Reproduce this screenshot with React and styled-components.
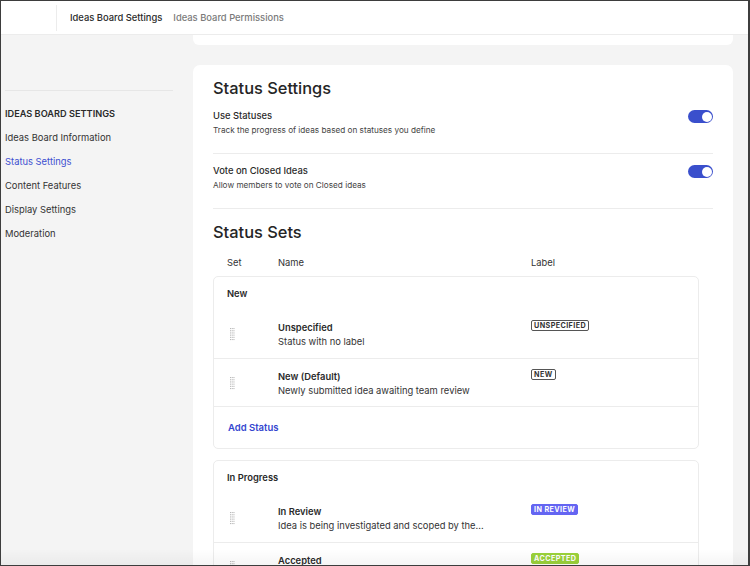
import React from 'react';
import styled, { createGlobalStyle } from 'styled-components';

const Global = createGlobalStyle`
  html, body { margin: 0; padding: 0; }
  body { font-family: Inter, "Noto Sans", sans-serif; color: #2b2b2b; }
  * { box-sizing: border-box; }
`;

const sidebarItems = [
  { label: 'Ideas Board Information' },
  { label: 'Status Settings', active: true },
  { label: 'Content Features' },
  { label: 'Display Settings' },
  { label: 'Moderation' },
];

const statusSets = [
  {
    name: 'New',
    rows: [
      { title: 'Unspecified', desc: 'Status with no label', badge: 'UNSPECIFIED', kind: 'outline' },
      { title: 'New (Default)', desc: 'Newly submitted idea awaiting team review', badge: 'NEW', kind: 'outline' },
    ],
    add: true,
  },
  {
    name: 'In Progress',
    rows: [
      { title: 'In Review', desc: 'Idea is being investigated and scoped by the...', badge: 'IN REVIEW', kind: 'indigo' },
      { title: 'Accepted', desc: 'Idea has been accepted', badge: 'ACCEPTED', kind: 'lime' },
    ],
  },
];

const DragHandle = () => (
  <svg width="5" height="13" viewBox="0 0 5 13">
    {[0, 1, 2, 3, 4, 5].map(r =>
      [0, 1, 2].map(c => (
        <rect key={`${r}-${c}`} x={c * 1.7} y={r * 2.2} width="1.1" height="1.1" fill="#b9b9b9" />
      ))
    )}
  </svg>
);

const App = () => (
  <Frame>
    <Global />
    <TopBar>
      <TopDivider />
      <Tab $active>Ideas Board Settings</Tab>
      <Tab>Ideas Board Permissions</Tab>
    </TopBar>
    <Body>
      <Sidebar>
        <SideRule />
        <SideHeading>IDEAS BOARD SETTINGS</SideHeading>
        {sidebarItems.map(item => (
          <SideItem key={item.label} $active={item.active}>{item.label}</SideItem>
        ))}
      </Sidebar>
      <Main>
        <PrevCard />
        <Card>
          <H1>Status Settings</H1>
          <Setting>
            <div>
              <SettingTitle>Use Statuses</SettingTitle>
              <SettingDesc>Track the progress of ideas based on statuses you define</SettingDesc>
            </div>
            <Toggle />
          </Setting>
          <Setting>
            <div>
              <SettingTitle>Vote on Closed Ideas</SettingTitle>
              <SettingDesc>Allow members to vote on Closed ideas</SettingDesc>
            </div>
            <Toggle />
          </Setting>
          <H2>Status Sets</H2>
          <HeaderRow>
            <span>Set</span>
            <span>Name</span>
            <span>Label</span>
          </HeaderRow>
          {statusSets.map(set => (
            <SetBox key={set.name}>
              <SetName>{set.name}</SetName>
              {set.rows.map(row => (
                <StatusRow key={row.title}>
                  <HandleCell><DragHandle /></HandleCell>
                  <div>
                    <RowTitle>{row.title}</RowTitle>
                    <RowDesc>{row.desc}</RowDesc>
                  </div>
                  <BadgeCell>
                    <Badge $kind={row.kind}>{row.badge}</Badge>
                  </BadgeCell>
                </StatusRow>
              ))}
              {set.add && <AddRow>Add Status</AddRow>}
            </SetBox>
          ))}
        </Card>
      </Main>
    </Body>
    <BottomFade />
  </Frame>
);

const Frame = styled.div`
  position: relative;
  width: 750px;
  height: 566px;
  overflow: hidden;
  border: 1px solid #3d3d3d;
  border-right-width: 2px;
  background: #f4f4f4;
`;

const TopBar = styled.div`
  height: 34px;
  background: #fff;
  border-bottom: 1px solid #ececec;
  display: flex;
  align-items: center;
  padding-left: 55px;
`;

const TopDivider = styled.div`
  width: 1px;
  height: 26px;
  background: #ececec;
  margin-right: 13px;
`;

const Tab = styled.div`
  font-size: 9.4px;
  font-weight: 500;
  color: ${p => (p.$active ? '#2a2a2a' : '#7a7a7a')};
  margin-right: 11px;
`;

const Body = styled.div`
  display: flex;
`;

const Sidebar = styled.div`
  width: 192px;
  padding: 55px 20px 0 4px;
`;

const SideRule = styled.div`
  height: 1px;
  background: #e6e6e6;
  margin-bottom: 11px;
`;

const SideHeading = styled.div`
  font-size: 9.2px;
  font-weight: 600;
  color: #2a2a2a;
  height: 24px;
  line-height: 24px;
`;

const SideItem = styled.div`
  font-size: 9.4px;
  color: ${p => (p.$active ? '#3b4fd0' : '#333')};
  height: 24px;
  line-height: 24px;
`;

const Main = styled.div`
  width: 540px;
`;

const PrevCard = styled.div`
  height: 10px;
  background: #fff;
  border-radius: 0 0 6px 6px;
  margin-bottom: 20px;
`;

const Card = styled.div`
  background: #fff;
  border-radius: 7px;
  padding: 12px 20px 20px;
`;

const H1 = styled.div`
  font-size: 16.4px;
  font-weight: 500;
  color: #252525;
  line-height: 22px;
  margin-bottom: 5px;
`;

const Setting = styled.div`
  display: flex;
  justify-content: space-between;
  align-items: flex-start;
  padding: 5px 0 16px;
  border-bottom: 1px solid #ececec;
  & + & { padding-top: 10px; }
`;

const SettingTitle = styled.div`
  font-size: 9.4px;
  font-weight: 500;
  color: #2a2a2a;
  line-height: 14px;
`;

const SettingDesc = styled.div`
  font-size: 8.2px;
  color: #444;
  line-height: 14px;
`;

const Toggle = styled.div`
  position: relative;
  width: 25px;
  height: 13px;
  border-radius: 7px;
  background: #3a4fcc;
  margin-top: 1px;
  &::after {
    content: '';
    position: absolute;
    right: 1.5px;
    top: 1.5px;
    width: 10px;
    height: 10px;
    border-radius: 50%;
    background: #fff;
  }
`;

const H2 = styled.div`
  font-size: 16.4px;
  font-weight: 500;
  color: #252525;
  line-height: 20px;
  margin-top: 13px;
`;

const HeaderRow = styled.div`
  display: grid;
  grid-template-columns: 51px 253px 1fr;
  padding: 0 14px;
  margin: 6px 14px 0 0;
  height: 28px;
  align-items: center;
  font-size: 9.4px;
  color: #333;
`;

const SetBox = styled.div`
  border: 1px solid #ececec;
  border-radius: 5px;
  margin-right: 14px;
  margin-bottom: 11px;
`;

const SetName = styled.div`
  font-size: 9.4px;
  font-weight: 600;
  color: #2a2a2a;
  padding: 11px 13px 0;
  height: 33px;
`;

const StatusRow = styled.div`
  display: grid;
  grid-template-columns: 50px 253px 1fr;
  padding: 9px 14px 0 14px;
  height: 48px;
  & + & { border-top: 1px solid #ececec; }
`;

const HandleCell = styled.div`
  padding: 6px 0 0 2px;
`;

const RowTitle = styled.div`
  font-size: 9.4px;
  font-weight: 600;
  color: #2a2a2a;
  line-height: 14px;
  margin-top: 2px;
`;

const RowDesc = styled.div`
  font-size: 9.4px;
  color: #333;
  line-height: 14px;
`;

const BadgeCell = styled.div`
  display: flex;
  align-items: flex-start;
  padding-top: 1px;
`;

const badgeStyles = {
  outline: 'background: #fff; color: #333; border: 1px solid #555;',
  indigo: 'background: #6465f2; color: #fff; border: 1px solid #6465f2;',
  lime: 'background: #9ad13a; color: #fff; border: 1px solid #9ad13a;',
};

const Badge = styled.span`
  display: inline-block;
  font-size: 7.2px;
  font-weight: 700;
  letter-spacing: 0.4px;
  line-height: 9px;
  padding: 0 2px;
  border-radius: 2px;
  ${p => badgeStyles[p.$kind]}
`;

const AddRow = styled.div`
  border-top: 1px solid #ececec;
  height: 42px;
  padding: 0 14px;
  display: flex;
  align-items: center;
  font-size: 9.5px;
  font-weight: 600;
  color: #3446cf;
`;

const BottomFade = styled.div`
  position: absolute;
  left: 0;
  right: 0;
  bottom: 0;
  height: 16px;
  background: linear-gradient(rgba(0, 0, 0, 0), rgba(0, 0, 0, 0.04));
  pointer-events: none;
`;

export default App;
